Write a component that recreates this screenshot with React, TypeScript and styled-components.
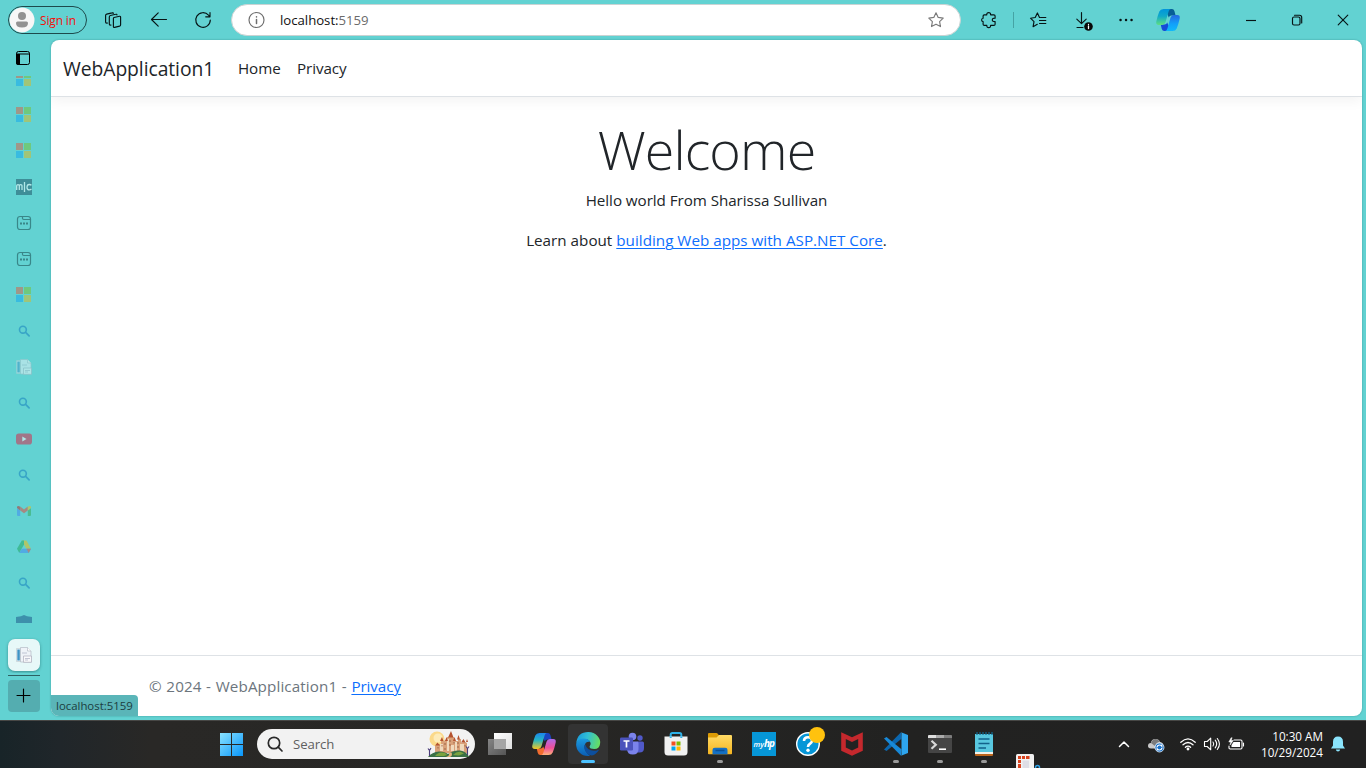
import React from 'react';
import styled, { createGlobalStyle } from 'styled-components';

const GlobalStyle = createGlobalStyle`
  * { box-sizing: border-box; }
  body { margin: 0; overflow: hidden; font-family: "Open Sans", "Noto Sans", sans-serif; }
  svg { display: block; flex: none; overflow: visible; }
  p, h1 { margin: 0; }
`;

const Desktop = styled.div`
  width: 1366px;
  height: 768px;
  display: flex;
  flex-direction: column;
  overflow: hidden;
`;

const BrowserWindow = styled.div`
  height: 720px;
  display: flex;
  flex-direction: column;
  background: #62d2d2;
`;

const Toolbar = styled.div`
  height: 40px;
  display: flex;
  align-items: center;
  padding-left: 8px;
`;

const SignIn = styled.div`
  width: 79px;
  height: 28px;
  margin-right: 3px;
  display: flex;
  align-items: center;
  gap: 5px;
  border: 1px solid #1d4a4c;
  border-radius: 14px;
  font-size: 12px;
  letter-spacing: -0.15px;
  color: #f5100c;
  white-space: nowrap;
`;

const Slot = styled.div<{ $w: number }>`
  width: ${(p) => p.$w}px;
  height: 32px;
  flex: none;
  display: flex;
  align-items: center;
  justify-content: center;
`;

const AddressBar = styled.div`
  width: 730px;
  height: 32px;
  margin: 0 8px 0 7px;
  padding: 0 16px 0 16px;
  display: flex;
  align-items: center;
  border: 1px solid #c9d3d3;
  border-radius: 16px;
  background: #fff;
`;

const Url = styled.span`
  flex: 1;
  margin-left: 15px;
  font-size: 13.2px;
  letter-spacing: -0.02px;
  color: #111;
  span { color: #6b6b6b; }
`;

const Divider = styled.div`
  width: 1px;
  height: 16px;
  margin-left: 5px;
  background: #45a3a4;
`;

const WindowControls = styled.div`
  display: flex;
  margin-left: auto;
`;

const Body = styled.div`
  flex: 1;
  display: flex;
  min-height: 0;
`;

const TabRail = styled.div`
  width: 51px;
  padding: 10px 0 0 8px;
  display: flex;
  flex-direction: column;
  align-items: flex-start;
`;

const RailHeader = styled.div`
  width: 32px;
  height: 26px;
  padding: 1px 0 0 8px;
`;

const TabList = styled.div`
  width: 32px;
  height: 597px;
  display: flex;
  flex-direction: column;
  justify-content: flex-end;
  overflow: hidden;
  margin: 0 -6px 2px;
  padding: 0 6px;
  box-sizing: content-box;
`;

const Tab = styled.div<{ $active?: boolean }>`
  width: 32px;
  height: 32px;
  margin: 2px 0;
  flex: none;
  display: flex;
  align-items: center;
  justify-content: center;
  border-radius: 7px;
  background: ${(p) => (p.$active ? '#e7f8f8' : 'transparent')};
  box-shadow: ${(p) => (p.$active ? '0 1px 3px rgba(0, 60, 60, .45)' : 'none')};
  svg { opacity: ${(p) => (p.$active ? 1 : 0.5)}; }
`;

const RailRule = styled.div`
  width: 32px;
  height: 1px;
  margin-bottom: 4px;
  flex: none;
  background: #2d6163;
`;

const NewTab = styled.div`
  width: 32px;
  height: 32px;
  flex: none;
  display: flex;
  align-items: center;
  justify-content: center;
  border-radius: 4px;
  background: #54adb0;
`;

const Page = styled.div`
  position: relative;
  width: 1311px;
  height: 676px;
  display: flex;
  flex-direction: column;
  background: #fff;
  border-radius: 8px;
  overflow: hidden;
  box-shadow: 0 0 2px rgba(0, 70, 70, .4);
  color: #212529;
  font-size: 15.2px;
`;

const SiteHeader = styled.header`
  height: 57px;
  flex: none;
  display: flex;
  align-items: center;
  padding-left: 12px;
  border-bottom: 1px solid #dee2e6;
  box-shadow: 0 4px 12px rgba(0, 0, 0, .05);
`;

const Brand = styled.span`
  width: 175px;
  font-size: 19.3px;
  letter-spacing: -0.06px;
`;

const NavItem = styled.span<{ $w: number }>`
  width: ${(p) => p.$w}px;
  letter-spacing: -0.08px;
`;

const Main = styled.main`
  flex: 1;
  display: flex;
  flex-direction: column;
  align-items: center;
  padding-top: 18px;
`;

const Title = styled.h1`
  height: 68px;
  line-height: 68px;
  font-size: 53.8px;
  font-weight: 300;
  letter-spacing: -0.9px;
`;

const Line = styled.p<{ $gap: number; $track?: number }>`
  height: 24px;
  line-height: 24px;
  margin-top: ${(p) => p.$gap}px;
  letter-spacing: ${(p) => p.$track ?? 0}px;
  white-space: nowrap;
`;

const Link = styled.span`
  color: #0d6efd;
  text-decoration: underline;
  text-decoration-thickness: 1px;
  text-underline-offset: 2px;
`;

const SiteFooter = styled.footer`
  height: 61px;
  display: flex;
  align-items: center;
  padding-left: 98px;
  border-top: 1px solid #dee2e6;
  letter-spacing: 0.12px;
  word-spacing: 0.5px;
  color: #6c757d;
  white-space: pre;
  span { letter-spacing: -0.08px; }
`;

const StatusBubble = styled.div`
  position: absolute;
  left: 0;
  bottom: 0;
  width: 87px;
  height: 21px;
  line-height: 21px;
  padding-left: 5px;
  font-size: 11.4px;
  color: #1c3d40;
  background: #5ab5b8;
  border-radius: 0 4px 0 0;
`;

const Taskbar = styled.div`
  height: 48px;
  display: flex;
  align-items: center;
  padding: 0 0 1px 210px;
  border-top: 1px solid #474745;
  background: linear-gradient(90deg, #182428 0, #20262a 60px, #292826 150px, #282725 480px, #222221 900px, #212121 1366px);
`;

const SearchBox = styled.div`
  width: 218px;
  height: 30px;
  margin: 0 3px 0 4px;
  padding: 0 5px 0 10px;
  display: flex;
  align-items: center;
  border-radius: 15px;
  background: #f2f2f2;
  span {
    flex: 1;
    margin-left: 10px;
    font-size: 13.2px;
    letter-spacing: -0.1px;
    color: #5f5f5f;
  }
`;

const TaskButton = styled.div<{ $active?: boolean }>`
  position: relative;
  width: 40px;
  height: 40px;
  margin: 0 2px;
  flex: none;
  display: flex;
  align-items: center;
  justify-content: center;
  border-radius: 4px;
  background: ${(p) => (p.$active ? '#333333' : 'transparent')};
`;

const RunMark = styled.i<{ $active?: boolean }>`
  position: absolute;
  left: ${(p) => (p.$active ? 13 : 17)}px;
  bottom: 1px;
  width: ${(p) => (p.$active ? 14 : 6)}px;
  height: 3px;
  border-radius: 2px;
  background: ${(p) => (p.$active ? '#4cc2ff' : '#9a9a9a')};
`;

const Tray = styled.div`
  margin-left: auto;
  display: flex;
  align-items: center;
  padding-right: 21px;
`;

const Clock = styled.div`
  width: 71px;
  margin-right: 8px;
  display: flex;
  flex-direction: column;
  align-items: flex-end;
  font-size: 11.7px;
  line-height: 16px;
  color: #fff;
  white-space: nowrap;
`;

type StrokeProps = { w?: number; h?: number; color?: string; sw?: number; children: React.ReactNode };
const Stroke = ({ w = 16, h = 16, color = '#061415', sw = 1.15, children }: StrokeProps) => (
  <svg width={w} height={h} viewBox={`0 0 ${w} ${h}`} fill="none" stroke={color} strokeWidth={sw} strokeLinecap="round" strokeLinejoin="round">
    {children}
  </svg>
);

const Avatar = () => (
  <svg width="26" height="26" viewBox="0 0 26 26">
    <circle cx="13" cy="13" r="12.500" fill="#f7f7f7" />
    <circle cx="13" cy="9" r="4" fill="#929292" />
    <path d="M7 16q0-1.500 1.500-1.500h9q1.500 0 1.500 1.500 0 4.500-6 4.500t-6-4.500z" fill="#929292" />
  </svg>
);

const MicrosoftTab = () => (
  <svg width="16" height="16">
    <path fill="#dc5d42" d="M0 0h7v7H0z" />
    <path fill="#7cc22d" d="M8 0h7v7H8z" />
    <path fill="#11a5ee" d="M0 8h7v7H0z" />
    <path fill="#dfba20" d="M8 8h7v7H8z" />
  </svg>
);

const McTab = () => (
  <svg width="16" height="16">
    <path fill="#1b4c60" d="M0 0h16v16H0z" />
    <g fill="none" stroke="#fff" strokeWidth="1.300">
      <path d="M.7 11V6.800Q.7 5.700 2 5.700t1.300 1.100V11M3.300 7q0-1.300 1.400-1.300T6 7v4M8.500 3v10M15.500 6.300q-1-.8-2.200-.8-2.300 0-2.300 2.700t2.300 2.700q1.200 0 2.200-.8" />
    </g>
  </svg>
);

const WindowTab = () => (
  <Stroke color="#123e43" sw={1.2}>
    <rect x="1.500" y="1.500" width="13" height="13" rx="2.500" />
    <path d="M6.500 1.500v1.800q0 1.200 1.200 1.200h6.800" />
    <path d="M4 8.500h2M7 8.500h2M10 8.500h2" strokeWidth="2" strokeLinecap="butt" />
  </Stroke>
);

const SearchTab = () => (
  <Stroke color="#1079bd" sw={1.6}>
    <circle cx="6.900" cy="6.700" r="3.400" />
    <path d="M9.600 9.400l3.500 3.500" />
  </Stroke>
);

const DocTab = () => (
  <svg width="16" height="16">
    <path d="M.5 1.500h4v13h-4z" fill="#f5f5f5" stroke="#b9c6cf" strokeWidth=".6" />
    <path d="M1.300 2.500h2.500v11H1.300z" fill="#3d94c6" />
    <path d="M4.500.5h7l3.500 3.500v11H4.500z" fill="#eff3f8" stroke="#b4bcc5" strokeWidth=".7" />
    <path d="M11.500.5V4H15" fill="#fff" stroke="#b4bcc5" strokeWidth=".7" />
    <path d="M7.500 9h8v6.300h-8z" fill="#f8f8fa" stroke="#adaebc" strokeWidth=".7" />
    <path d="M6 6h5M9 11.500h5M9 13h3" stroke="#b4b8c9" strokeWidth=".8" />
  </svg>
);

const YoutubeTab = () => (
  <svg width="16" height="16">
    <rect y="2.500" width="16" height="11" rx="2.800" fill="#e01c42" />
    <path d="M6.300 5.500l4.200 2.500-4.200 2.500z" fill="#fff" />
  </svg>
);

const GmailTab = () => (
  <svg width="16" height="16" viewBox="0 0 16 16">
    <path fill="#4285f4" d="M1 5l3.200 2.400v5.600H2q-1 0-1-1z" />
    <path fill="#34a853" d="M15 5l-3.200 2.400v5.600H14q1 0 1-1z" />
    <path fill="#ea4335" d="M4.200 3.500L8 6.400l3.800-2.900v3.900L8 10.300 4.200 7.400z" />
    <path fill="#c5221f" d="M1 4.200Q1 3 2.300 3q.8 0 1.900.8v3.600L1 5z" />
    <path fill="#fbbc04" d="M15 4.200Q15 3 13.700 3q-.8 0-1.900.8v3.600L15 5z" />
  </svg>
);

const DriveTab = () => (
  <svg width="16" height="16" viewBox="0 0 16 16">
    <path fill="#fbbc04" d="M8 1.500h2.500L15 9.800h-4.600L5.800 1.500z" />
    <path fill="#1da55c" d="M5.800 1.500H8L8 5.600 3.300 14 1 9.800z" />
    <path fill="#4285f4" d="M5.600 9.800H15L12.700 14H3.300z" />
    <path fill="#ea4335" d="M10.400 9.800H15L12.700 14z" />
  </svg>
);

const RoofTab = () => (
  <svg width="16" height="16">
    <path fill="#174d84" d="M0 6l5-.8L8 4l3 1.200 5 .8v6H0z" />
  </svg>
);

const Copilot = ({ blue }: { blue?: boolean }) => {
  const id = blue ? 'cb' : 'cc';
  return (
    <svg width="24" height="24" viewBox="0 0 24 24">
      <defs>
        <linearGradient id={`${id}a`} x1="0" y1="0" x2="0" y2="1">
          <stop offset="0" stopColor={blue ? '#0095dc' : '#1c84ec'} />
          <stop offset=".45" stopColor={blue ? '#10a9c9' : '#24b6c4'} />
          <stop offset="1" stopColor={blue ? '#5fdf80' : '#f4c722'} />
        </linearGradient>
        <linearGradient id={`${id}b`} x1="0" y1="0" x2="0" y2="1">
          <stop offset="0" stopColor={blue ? '#2569df' : '#ae6be9'} />
          <stop offset=".55" stopColor={blue ? '#12a0fa' : '#ee4f99'} />
          <stop offset="1" stopColor={blue ? '#0fb9fb' : '#ffb27a'} />
        </linearGradient>
      </defs>
      <path d="M13 1h3q1.800 0 2.400 2l1.200 4.500h-4.200q-2 0-2.600 2L10 3z" fill={blue ? '#075f96' : '#1a43bf'} />
      <path d="M11 23H8.200q-1.800 0-2.400-2l-1.100-4.500h3.900q2 0 2.600-2L14 21z" fill={blue ? '#164bd7' : '#f26c2f'} />
      <path d="M7.500 1h7.300q-1.600.4-2.200 2.500L9.500 14.300q-.8 2.700-3.300 2.700H2.900Q-.4 17 .3 13.600 1.500 8 3.300 3.600 4.400 1 7.500 1z" fill={`url(#${id}a)`} />
      <path d="M16.500 23H9.200q1.600-.4 2.200-2.500L14.500 9.700q.8-2.700 3.300-2.700h3.300q3.300 0 2.600 3.400-1.200 5.600-3 10-1.100 2.600-4.200 2.600z" fill={`url(#${id}b)`} />
    </svg>
  );
};

const WindowsLogo = () => (
  <svg width="23" height="23">
    <defs>
      <linearGradient id="win" x1="0" y1="0" x2="23" y2="23" gradientUnits="userSpaceOnUse">
        <stop offset="0" stopColor="#8ae3ff" />
        <stop offset="1" stopColor="#0895fa" />
      </linearGradient>
    </defs>
    <path fill="url(#win)" d="M0 0h11v11H0zM12 0h11v11H12zM0 12h11v11H0zM12 12h11v11H12z" />
  </svg>
);

const Castle = () => (
  <svg width="43" height="28" viewBox="0 0 43 28">
    <circle cx="10" cy="9" r="7.500" fill="#fbd98a" />
    <circle cx="11" cy="8" r="4.500" fill="#fdebb9" />
    <path fill="#d9a179" d="M8 16l3-2h3v-3h3l1-1h2V7h7v4h4V9h3v4l4-1 2 1v10H8z" />
    <path fill="#f0d9bd" d="M13 14h3v7h-3zM20 9h2v12h-2zM28 12h2v9h-2zM33 14h4v8h-4zM24 15h3v6h-3z" />
    <path fill="#b5522f" d="M8 15.500l2.500-3 2.500 3zM13 11l2-4 1.500 4zM21 7.500L24 1l2.500 6.500zM18 11l1.500-4 1.500 4zM26 11l1.500-4 1.500 4zM30 9.500L31.500 5 33 9.500zM34 12.500L36.500 9l2 3.500zM39 12l1-3 1 3z" />
    <path stroke="#8d553c" strokeWidth=".8" d="M11 17v1.500M15 15v1.500M18 13v2M23 10v2M23 14v2M27 12v1.500M31 12v2M31 16v2M38 15v1.500M18 18v2" />
    <path fill="#3a7045" d="M1 27q4-5 11-5.500 6 0 9 2.500 5-4 12-3.500 7 1 9 6.500z" />
    <path fill="#7aa33f" d="M8 26q3-4 7-3.500 4 0 5 2.500l-3 1zM26 25q4-4 8-3l3 1.500-5 2z" />
    <path fill="#e0b37a" d="M19 27q4-1 3-4.500h2.500q1.500 3-1.500 4.500z" />
    <path d="M2.500 26v-6M1 18.500l1.500 2L4 18M40.500 25v-7M39 16.500l1.500 2 1.500-2" stroke="#4a3b7a" strokeWidth="1.100" fill="none" />
  </svg>
);

const TaskView = () => (
  <svg width="24" height="24">
    <defs>
      <linearGradient id="tvw" x1="0" y1="0" x2="1" y2="1"><stop stopColor="#fff" /><stop offset="1" stopColor="#dedede" /></linearGradient>
      <linearGradient id="tvg" x1="0" y1="0" x2="1" y2="1"><stop stopColor="#858585" /><stop offset="1" stopColor="#555" /></linearGradient>
    </defs>
    <path fill="url(#tvw)" d="M6 1h18v16H6z" />
    <path fill="url(#tvg)" d="M0 7h18v16H0z" />
    <path fill="#a5a5a5" d="M6 7h12v10H6z" />
  </svg>
);

const Edge = () => (
  <svg width="24" height="24" viewBox="0 0 24 24">
    <defs>
      <linearGradient id="eg" x1="0" y1=".3" x2="1" y2=".5">
        <stop stopColor="#199bdc" /><stop offset=".45" stopColor="#31bfd4" /><stop offset="1" stopColor="#67de60" />
      </linearGradient>
      <linearGradient id="eb" x1="0" y1="0" x2="0" y2="1">
        <stop stopColor="#1b9ae0" /><stop offset="1" stopColor="#0b5db2" />
      </linearGradient>
    </defs>
    <path d="M.2 11Q1.500 0 12.300 0 18 0 21.500 4T24 12q-.5 5-5.700 5-4.700 0-4.700-2.200 0-.7.7-1.700.6-1 .2-2.400Q13.200 7 8.500 7 3 7 .2 11z" fill="url(#eg)" />
    <path d="M.1 12Q1 6.500 7.500 6.500q4.700 0 6.700 3.300Q9.200 9 8.500 14q-.2 5.500 5.500 9.800Q8 25 3.700 20.800 0 17.200.1 12z" fill="url(#eb)" />
    <path d="M9.200 12.300q-2 3 .2 7 2.300 4 6.400 4.200 4.200-1 6.800-5.100.3-.8-.6-.5-1.800.9-4 .9-7 0-8.800-6.500z" fill="#0d4f9e" />
  </svg>
);

const Teams = () => (
  <svg width="24" height="24" viewBox="0 0 24 24">
    <circle cx="20" cy="6" r="2.700" fill="#5059c9" />
    <circle cx="12.500" cy="4.500" r="3.800" fill="#7b83eb" />
    <path d="M17 9.500h5.500q1.500 0 1.500 1.500v5q0 4.500-4.500 4.500H17z" fill="#5059c9" />
    <path d="M7 9.500h10q1.500 0 1.500 1.500v6q0 5.500-5.700 5.500T7 17z" fill="#7b83eb" />
    <rect y="5.500" width="13" height="13" rx="1.300" fill="#4b53bc" />
    <path d="M3.500 9h6M6.500 9v6.500" stroke="#fff" strokeWidth="1.700" />
  </svg>
);

const Store = () => (
  <svg width="24" height="24">
    <path d="M6.700 6V2.700Q6.700 1 8.400 1h7.200q1.700 0 1.700 1.700V6" fill="none" stroke="#2fb2e8" strokeWidth="2" />
    <path d="M.5 4.500h23V20q0 3.500-3.500 3.500H4Q.5 23.500.5 20z" fill="#f1f1f1" />
    <path d="M6.700 6V4.400M17.300 6V4.400" stroke="#2fb2e8" strokeWidth="2" />
    <path fill="#f25022" d="M7.500 9.500h4v4h-4z" /><path fill="#7fba00" d="M12.500 9.500h4v4h-4z" />
    <path fill="#00a4ef" d="M7.500 14.500h4v4h-4z" /><path fill="#ffb900" d="M12.500 14.500h4v4h-4z" />
  </svg>
);

const Explorer = () => (
  <svg width="24" height="24">
    <defs><linearGradient id="fo" x1="0" y1="0" x2="0" y2="1"><stop stopColor="#ffdb66" /><stop offset="1" stopColor="#f6b520" /></linearGradient></defs>
    <path d="M0 6V2q0-1 1-1h7.500q.6 0 1 .5L11.500 4v3z" fill="#dc9b05" />
    <path d="M0 5.500h8.500L11 3h12q1 0 1 1v17.500q0 .8-.8.800H.8Q0 22.300 0 21.500z" fill="url(#fo)" />
    <path d="M4.500 22.300V18q0-2.300 2.300-2.300h10.400q2.300 0 2.300 2.300v4.300z" fill="#1570c3" />
    <path d="M7.500 18.500h9" stroke="#0b4f94" strokeWidth="1.500" />
  </svg>
);

const MyHp = () => (
  <svg width="24" height="24">
    <path d="M0 0h24v24H0z" fill="#0696d7" />
    <text x="1.500" y="14.500" fontFamily="Open Sans, sans-serif" fontSize="7.500" fontWeight="600" fontStyle="italic" fill="#fff">my</text>
    <text x="12" y="15" fontFamily="Open Sans, sans-serif" fontSize="10" fontWeight="700" fontStyle="italic" letterSpacing="-1" fill="#fff">hp</text>
  </svg>
);

const Help = () => (
  <svg width="24" height="24">
    <circle cx="12" cy="12" r="11.300" fill="#0696d7" stroke="#fff" strokeWidth="1.400" />
    <path d="M8 9q0-3.800 4-3.800T16 8.800q0 2-2.300 3.200-1.700.9-1.700 3" fill="none" stroke="#fff" strokeWidth="2.600" />
    <circle cx="12" cy="18.300" r="1.700" fill="#fff" />
    <circle cx="21" cy="3" r="8" fill="#ffc20e" />
  </svg>
);

const McAfee = () => (
  <svg width="24" height="24">
    <path d="M1.200.3L12 5.300 22.800.3v18.500L12 23.700 1.200 18.800z" fill="#c4282d" />
    <path d="M5.800 7l6.200 3 6.200-3v8.500L12 18.500l-6.200-3z" fill="#222" />
  </svg>
);

const VsCode = () => (
  <svg width="24" height="24" viewBox="0 0 24 24">
    <path d="M0 17.500L17 .2l.5 6.600-15 12.200z" fill="#0b66ae" />
    <path d="M2.500 5l15 12.200-.5 6.600L0 6.500z" fill="#1889d8" />
    <path d="M17 .2L24 3v18l-7 2.800q.5-.3.500-1.300V1.500q0-1-.5-1.300z" fill="#2ea5ee" />
  </svg>
);

const Terminal = () => (
  <svg width="24" height="24">
    <rect y="3" width="24" height="18" rx="1" fill="#454545" />
    <path d="M0 6V4q0-1 1-1h7v3z" fill="#dedede" /><path d="M8 3h8v3H8z" fill="#aaa" /><path d="M16 3h7q1 0 1 1v2h-8z" fill="#7d7d7d" />
    <path d="M3.500 8.800l4.300 4-4.300 4" fill="none" stroke="#d9d9d9" strokeWidth="2.200" />
    <path d="M11 17.200h7" stroke="#fff" strokeWidth="1.600" />
  </svg>
);

const Notepad = () => (
  <svg width="24" height="24">
    <path d="M3 2h18v20H3z" fill="#58c7df" />
    <path d="M3 20h18v2H3z" fill="#f1f1e9" /><path d="M3 22h18v1q0 1-1 1H4q-1 0-1-1z" fill="#bc651c" />
    <path d="M5 0v3M8 0v3M11 0v3M14 0v3M17 0v3M20 0v3" stroke="#12688f" strokeWidth="1.200" />
    <path d="M6.500 7h11M6.500 11.500h11M6.500 16H14" stroke="#12628b" strokeWidth="1.700" />
  </svg>
);

const Snip = () => (
  <svg width="24" height="14" viewBox="0 0 24 14">
    <rect x="0" y="0" width="18" height="18" rx="1.500" fill="#f1f1f1" />
    <path d="M2 2h3v3H2zM6 2h3v3H6zM10 2h3.500v3H10zM2 6h3v3H2zM2 10h3v4H2z" fill="#d9431e" />
    <path d="M6.500 6.500h6.500V14H6.500z" fill="#dedee6" />
    <circle cx="21.500" cy="13.500" r="2" fill="none" stroke="#2fa4e8" strokeWidth="1.500" />
  </svg>
);

const SnipDrop = styled.div`
  width: 24px;
  height: 13px;
  align-self: flex-end;
  margin-left: 10px;
`;

const tabs = [
  MicrosoftTab, MicrosoftTab, MicrosoftTab, McTab, WindowTab, WindowTab, MicrosoftTab, SearchTab, DocTab,
  SearchTab, YoutubeTab, SearchTab, GmailTab, DriveTab, SearchTab, RoofTab,
];

const pinned = [
  { Icon: TaskView }, { Icon: Copilot }, { Icon: Edge, active: true, open: true }, { Icon: Teams }, { Icon: Store },
  { Icon: Explorer, open: true }, { Icon: MyHp }, { Icon: Help }, { Icon: McAfee }, { Icon: VsCode, open: true },
  { Icon: Terminal, open: true }, { Icon: Notepad, open: true },
];

const star = 'M8 .8l2.200 4.600 5 .7-3.600 3.500.9 5L8 12.200l-4.500 2.400.9-5L.8 6.100l5-.7z';

export default function App() {
  return (
    <Desktop>
      <GlobalStyle />
      <BrowserWindow>
        <Toolbar>
          <SignIn><Avatar />Sign in</SignIn>
          <Slot $w={46}>
            <Stroke>
              <path d="M9 5.500l5.500-1.200q1.100-.2 1.100 1v7.500q0 1-1 1.300l-5 1.300q-1.200.3-1.200-.9V6.600q0-.9.600-1.100z" />
              <path d="M6 13l-.8.100q-.9 0-.9-1V5q0-1.200 1.100-1.500l5.300-1.200q1.200-.3 1.300.6" />
              <path d="M2.500 11l-1 .1q-.9 0-.9-1V3.600q0-1.200 1.100-1.500L7 .9Q8.200.6 8.300 1.400" />
            </Stroke>
          </Slot>
          <Slot $w={46}><Stroke><path d="M.5 7.500h15M7.200.8L.5 7.500l6.700 6.700" /></Stroke></Slot>
          <Slot $w={42}><Stroke><path d="M15.300 8A7.300 7.300 0 1 1 13.500 3.200L15 4.800M15 .5v4.300h-4.300" /></Stroke></Slot>
          <AddressBar>
            <Stroke w={17} color="#6d6d6d"><circle cx="8.500" cy="8" r="7.500" /><path d="M8.500 7.500v4M8.500 4.800v.2" strokeWidth="1.500" /></Stroke>
            <Url>localhost:<span>5159</span></Url>
            <Stroke color="#7a7a7a"><path d={star} /></Stroke>
          </AddressBar>
          <Slot $w={39}>
            <Stroke>
              <path d="M3.300 2.800h2.500Q5.700.6 7.700.6t1.900 2.200h3.300q1.200 0 1.200 1.200v2.200q-2.800-.1-2.800 1.700t2.800 1.700v2.600q0 1.200-1.200 1.200H9.600q.1 2.200-1.900 2.200t-1.900-2.200H3.300q-1.200 0-1.200-1.200V9.600Q.6 9.400.6 7.900t1.500-1.700V4q0-1.200 1.200-1.200z" />
            </Stroke>
          </Slot>
          <Divider />
          <Slot $w={48}>
            <Stroke><path d="M9.500 5.500L7.400.9 5.200 5.500l-4.700.7L4 9.700l-.9 5L7.300 12.300M10.500 5.500h5.300M9.500 8.500h6.300M9.500 11.500h6.300" /></Stroke>
          </Slot>
          <Slot $w={44}>
            <Stroke w={18}>
              <path d="M6.500.5v11M1.800 7.200l4.700 4.500 4.700-4.500M2 15.500h6" />
              <circle cx="13.500" cy="14.500" r="4.300" fill="#080808" stroke="none" />
              <path d="M13.500 14v2.500M13.500 12.300v.1" stroke="#fff" strokeWidth="1.300" />
            </Stroke>
          </Slot>
          <Slot $w={40}><Stroke sw={2.4}><path d="M2.500 8h.1M8 8h.1M13.500 8h.1" /></Stroke></Slot>
          <Slot $w={44}><Copilot blue /></Slot>
          <WindowControls>
            <Slot $w={46}><Stroke><path d="M3 8.500h10" strokeLinecap="butt" /></Stroke></Slot>
            <Slot $w={46}><Stroke><rect x="3.500" y="5" width="7.500" height="8" rx="1.500" /><path d="M5.500 3.200h5q2.200 0 2.200 2.200V11" /></Stroke></Slot>
            <Slot $w={46}><Stroke><path d="M3.200 3.200l9.600 9.600M12.800 3.200l-9.600 9.600" /></Stroke></Slot>
          </WindowControls>
        </Toolbar>
        <Body>
          <TabRail>
            <RailHeader>
              <svg width="14" height="14">
                <rect x=".5" y=".5" width="13" height="13" rx="2" fill="none" stroke="#000" />
                <path d="M0 3h4v11H2q-2 0-2-2zM0 2.500h14v1H0z" />
              </svg>
            </RailHeader>
            <TabList>
              {tabs.map((Icon, i) => <Tab key={i}><Icon /></Tab>)}
              <Tab $active><DocTab /></Tab>
            </TabList>
            <RailRule />
            <NewTab><Stroke color="#000"><path d="M1 7.500h13M7.500 1v13" /></Stroke></NewTab>
          </TabRail>
          <Page>
            <SiteHeader>
              <Brand>WebApplication1</Brand>
              <NavItem $w={59}>Home</NavItem>
              <NavItem $w={60}>Privacy</NavItem>
            </SiteHeader>
            <Main>
              <Title>Welcome</Title>
              <Line $gap={5} $track={-0.05}>Hello world From Sharissa Sullivan</Line>
              <Line $gap={16} $track={0.02}>Learn about <Link>building Web apps with ASP.NET Core</Link>.</Line>
            </Main>
            <SiteFooter>© 2024 - WebApplication1 - <Link>Privacy</Link></SiteFooter>
            <StatusBubble>localhost:5159</StatusBubble>
          </Page>
        </Body>
      </BrowserWindow>
      <Taskbar>
        <Slot $w={43}><WindowsLogo /></Slot>
        <SearchBox>
          <Stroke color="#292929" sw={1.7}><circle cx="7" cy="7" r="5.700" /><path d="M11.200 11.200l3.800 3.800" /></Stroke>
          <span>Search</span>
          <Castle />
        </SearchBox>
        {pinned.map(({ Icon, active, open }, i) => (
          <TaskButton key={i} $active={active}><Icon />{open && <RunMark $active={active} />}</TaskButton>
        ))}
        <SnipDrop><Snip /></SnipDrop>
        <Tray>
          <Slot $w={32}><Stroke color="#fff" sw={1.5}><path d="M3.500 10.500L8 6l4.500 4.500" /></Stroke></Slot>
          <Slot $w={32}>
            <svg width="18" height="16">
              <path d="M4 12.500Q1 12.500 1 9.800 1 7.200 3.800 7 4.500 3 8.500 3q3.500 0 4.500 3 3.500.5 3.500 4l-2 2.500z" fill="#c9c9c9" />
              <path d="M6 4q4-2.500 7 2-4 0-5 4L4 7q.5-2 2-3z" fill="#7b7b7b" />
              <circle cx="12.500" cy="11.500" r="4.500" fill="#1870c9" stroke="#e7f2fb" strokeWidth=".8" />
              <path d="M10 11q.5-2 2.500-2 1.500 0 2.300 1.200V8.500M15 12q-.5 2-2.500 2-1.500 0-2.300-1.200v1.700" fill="none" stroke="#fff" strokeWidth="1.200" />
            </svg>
          </Slot>
          <Slot $w={32}>
            <Stroke color="#fff" sw={1.3}>
              <path d="M.8 6.200q7.200-6.700 14.400 0M3 8.800q5-4.700 10 0M5.400 11.300q2.600-2.400 5.200 0" />
              <circle cx="8" cy="13" r=".8" fill="#fff" />
            </Stroke>
          </Slot>
          <Slot $w={16}>
            <Stroke color="#fff" sw={1.1}>
              <path d="M.5 5.500h2.700l3.500-3.300v11.600l-3.500-3.300H.5zM9 6q1.500 2 0 4M11.200 4.200q3 3.800 0 7.600M13.300 2.500q4.300 5.500 0 11" />
            </Stroke>
          </Slot>
          <Slot $w={32}>
            <Stroke color="#fff" sw={1.1}>
              <path d="M6 4h6.800q1.200 0 1.200 1.200v6.600q0 1.200-1.200 1.200H2.200Q1 13 1 11.800V10M15.500 7v3" />
              <path d="M5.500 6H12v5H3.500V9z" fill="#fff" stroke="none" />
              <path d="M3 2L.8 6h2L2 9l3.300-4.500H3.200L4 2z" fill="#fff" strokeWidth=".5" />
            </Stroke>
          </Slot>
          <Clock><span>10:30 AM</span><span>10/29/2024</span></Clock>
          <svg width="14" height="16" viewBox="0 0 14 16">
            <path d="M7 .5q5 0 5 5.500v3.500l2 3H0l2-3V6Q2 .5 7 .5zM4.800 13.500h4.400Q8.800 15.500 7 15.500t-2.200-2z" fill="#8be5fd" />
          </svg>
        </Tray>
      </Taskbar>
    </Desktop>
  );
}
